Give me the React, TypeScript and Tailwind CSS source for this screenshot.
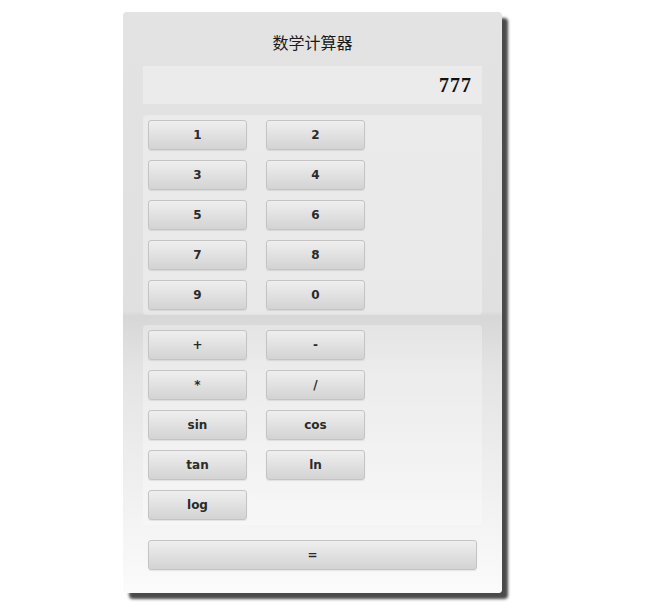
import React from "react";

function Btn({ label, wide }: { label: string; wide?: boolean }) {
  return (
    <button
      className={
        (wide ? "w-[329px] ml-[5px] " : "w-[99px] ") +
        "h-[30px] rounded-[3px] border border-[#c4c4c4] bg-gradient-to-b from-[#efefef] to-[#d3d3d3] text-[12px] font-bold text-[#2a2a2a] shadow-[0_1px_1px_rgba(0,0,0,0.08)] flex items-center justify-center"
      }
      style={{ fontFamily: '"DejaVu Sans", Verdana, sans-serif' }}
    >
      {label}
    </button>
  );
}

export default function App() {
  const nums = ["1", "2", "3", "4", "5", "6", "7", "8", "9", "0"];
  const ops = ["+", "-", "*", "/", "sin", "cos", "tan", "ln", "log"];
  return (
    <div className="w-[650px] h-[613px] bg-white overflow-hidden">
      <div className="ml-[123px] pt-[12px]">
        <div
          className="w-[379px] h-[581px] rounded-[4px] px-[20px] pt-[18px] shadow-[6px_6px_3px_#4a4a4a] flex flex-col"
          style={{
            background:
              "linear-gradient(to bottom, #e3e3e3 0%, #e0e0e0 51.5%, #d7d7d7 52.3%, #e4e4e4 62%, #fbfbfb 100%)",
          }}
        >
          <div
            className="h-[24px] leading-[24px] text-center text-[16px] text-[#1a1a1a]"
            style={{ fontFamily: '"Noto Sans CJK SC", sans-serif' }}
          >
            数学计算器
          </div>
          <div className="mt-[12px] h-[38px] bg-[#ebebeb] flex items-center justify-end pr-[10px]">
            <span
              className="text-[20px] font-bold text-[#111] tracking-[1px]"
              style={{ fontFamily: '"Liberation Serif", "Times New Roman", serif' }}
            >
              777
            </span>
          </div>
          <div className="mt-[11px] rounded-[4px] p-[5px] bg-white/30 grid grid-cols-[99px_99px] gap-x-[19px] gap-y-[10px]">
            {nums.map((n) => (
              <Btn key={n} label={n} />
            ))}
          </div>
          <div className="mt-[10px] rounded-[4px] p-[5px] bg-white/30 grid grid-cols-[99px_99px] gap-x-[19px] gap-y-[10px]">
            {ops.map((n) => (
              <Btn key={n} label={n} />
            ))}
          </div>
          <div className="mt-[15px]">
            <Btn label="=" wide />
          </div>
        </div>
      </div>
    </div>
  );
}
